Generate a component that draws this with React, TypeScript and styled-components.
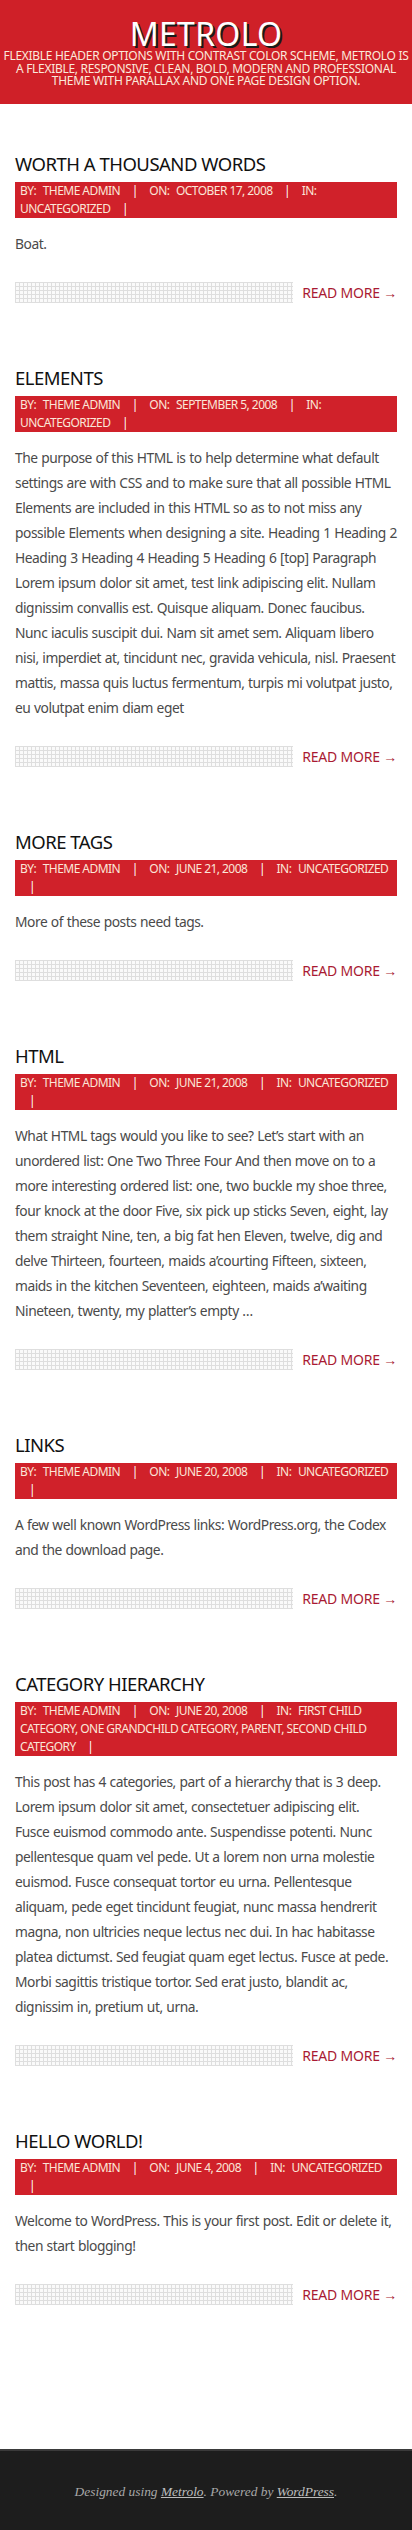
import styled, { createGlobalStyle } from "styled-components";

const GlobalStyle = createGlobalStyle`
  html, body {
    margin: 0;
    padding: 0;
    background: #ffffff;
  }
  body {
    font-family: "Noto Sans", "Open Sans", sans-serif;
  }
`;

type PostT = {
  title: string;
  date: string;
  category: string;
  body: string;
};

const posts: PostT[] = [
  {
    title: "Worth a Thousand Words",
    date: "October 17, 2008",
    category: "Uncategorized",
    body: "Boat.",
  },
  {
    title: "Elements",
    date: "September 5, 2008",
    category: "Uncategorized",
    body: "The purpose of this HTML is to help determine what default settings are with CSS and to make sure that all possible HTML Elements are included in this HTML so as to not miss any possible Elements when designing a site. Heading 1 Heading 2 Heading 3 Heading 4 Heading 5 Heading 6 [top] Paragraph Lorem ipsum dolor sit amet, test link adipiscing elit. Nullam dignissim convallis est. Quisque aliquam. Donec faucibus. Nunc iaculis suscipit dui. Nam sit amet sem. Aliquam libero nisi, imperdiet at, tincidunt nec, gravida vehicula, nisl. Praesent mattis, massa quis luctus fermentum, turpis mi volutpat justo, eu volutpat enim diam eget",
  },
  {
    title: "More Tags",
    date: "June 21, 2008",
    category: "Uncategorized",
    body: "More of these posts need tags.",
  },
  {
    title: "HTML",
    date: "June 21, 2008",
    category: "Uncategorized",
    body: "What HTML tags would you like to see? Let\u2019s start with an unordered list: One Two Three Four And then move on to a more interesting ordered list: one, two buckle my shoe three, four knock at the door Five, six pick up sticks Seven, eight, lay them straight Nine, ten, a big fat hen Eleven, twelve, dig and delve Thirteen, fourteen, maids a\u2019courting Fifteen, sixteen, maids in the kitchen Seventeen, eighteen, maids a\u2019waiting Nineteen, twenty, my platter\u2019s empty \u2026",
  },
  {
    title: "Links",
    date: "June 20, 2008",
    category: "Uncategorized",
    body: "A few well known WordPress links: WordPress.org, the Codex and the download page.",
  },
  {
    title: "Category Hierarchy",
    date: "June 20, 2008",
    category:
      "First Child Category, One Grandchild Category, Parent, Second Child Category",
    body: "This post has 4 categories, part of a hierarchy that is 3 deep. Lorem ipsum dolor sit amet, consectetuer adipiscing elit. Fusce euismod commodo ante. Suspendisse potenti. Nunc pellentesque quam vel pede. Ut a lorem non urna molestie euismod. Fusce consequat tortor eu urna. Pellentesque aliquam, pede eget tincidunt feugiat, nunc massa hendrerit magna, non ultricies neque lectus nec dui. In hac habitasse platea dictumst. Sed feugiat quam eget lectus. Fusce at pede. Morbi sagittis tristique tortor. Sed erat justo, blandit ac, dignissim in, pretium ut, urna.",
  },
  {
    title: "Hello world!",
    date: "June 4, 2008",
    category: "Uncategorized",
    body: "Welcome to WordPress. This is your first post. Edit or delete it, then start blogging!",
  },
];

const Header = styled.header`
  background: #cf2028;
  padding: 18px 0 16px;
  text-align: center;
`;

const SiteTitle = styled.h1`
  margin: 0;
  font-size: 32px;
  line-height: 32px;
  font-weight: 400;
  letter-spacing: 0.3px;
  color: #ffffff;
  text-transform: uppercase;
  text-shadow: 2px 2px 0 #1a1a1a;
`;

const Tagline = styled.p`
  margin: 0;
  font-size: 12px;
  line-height: 12.5px;
  letter-spacing: -0.3px;
  color: #fbe9dc;
  text-transform: uppercase;
`;

const Main = styled.main`
  padding: 48px 15px 144px;
`;

const Article = styled.article`
  margin-bottom: 63px;
  &:last-child {
    margin-bottom: 0;
  }
`;

const PostTitle = styled.h2`
  margin: 0 0 6px;
  font-size: 18.5px;
  line-height: 24px;
  font-weight: 400;
  letter-spacing: -0.5px;
  color: #111111;
  text-transform: uppercase;
`;

const Meta = styled.div`
  background: #d0212a;
  padding: 0 5px;
  font-size: 12px;
  line-height: 18px;
  letter-spacing: -0.55px;
  color: #fbe6d8;
  text-transform: uppercase;
`;

const MetaLabel = styled.span`
  margin-right: 4px;
`;

const MetaLink = styled.a`
  color: #fbe6d8;
  text-decoration: none;
`;

const Sep = styled.span`
  padding: 0 9px;
  color: #ffffff;
`;

const Excerpt = styled.p`
  margin: 13.5px 0 25.5px;
  font-size: 13.8px;
  line-height: 25px;
  letter-spacing: -0.46px;
  word-spacing: 0.5px;
  color: #4a4a4a;
`;

const MoreRow = styled.div`
  display: flex;
  align-items: center;
  height: 21px;
`;

const Grid = styled.div`
  flex: 1;
  height: 21px;
  margin-right: 9px;
  background-color: #fafafa;
  background-image: repeating-linear-gradient(
      90deg,
      #dedede 0,
      #dedede 1px,
      transparent 1px,
      transparent 4px
    ),
    repeating-linear-gradient(
      180deg,
      #dedede 0,
      #dedede 1px,
      transparent 1px,
      transparent 4px
    );
`;

const ReadMore = styled.a`
  font-size: 14px;
  line-height: 21px;
  letter-spacing: -0.2px;
  color: #a91a33;
  text-transform: uppercase;
  text-decoration: none;
  white-space: nowrap;
`;

const Footer = styled.footer`
  background: #1d1d1d;
  border-top: 2px solid #3a3a3a;
  padding: 32px 0 32px;
  text-align: center;
  font-family: "Liberation Serif", "DejaVu Serif", serif;
  font-style: italic;
  font-size: 13.4px;
  line-height: 17px;
  color: #a8a8a8;
`;

const FooterLink = styled.a`
  color: #bdbdbd;
  text-decoration: underline;
`;

function PostMeta({ post }: { post: PostT }) {
  return (
    <Meta>
      <MetaLabel>By:</MetaLabel> <MetaLink>Theme Admin</MetaLink> <Sep>|</Sep>{" "}
      <MetaLabel>On:</MetaLabel> <MetaLink>{post.date}</MetaLink> <Sep>|</Sep>{" "}
      <MetaLabel>In:</MetaLabel> <MetaLink>{post.category}</MetaLink>{" "}
      <Sep>|</Sep>
    </Meta>
  );
}

export default function App() {
  return (
    <>
      <GlobalStyle />
      <Header>
        <SiteTitle>Metrolo</SiteTitle>
        <Tagline>
          Flexible header options with contrast color scheme, Metrolo is a
          flexible, responsive, clean, bold, modern and professional theme with
          parallax and one page design option.
        </Tagline>
      </Header>
      <Main>
        {posts.map((post) => (
          <Article key={post.title}>
            <PostTitle>{post.title}</PostTitle>
            <PostMeta post={post} />
            <Excerpt>{post.body}</Excerpt>
            <MoreRow>
              <Grid />
              <ReadMore>Read More &rarr;</ReadMore>
            </MoreRow>
          </Article>
        ))}
      </Main>
      <Footer>
        Designed using <FooterLink>Metrolo</FooterLink>. Powered by{" "}
        <FooterLink>WordPress</FooterLink>.
      </Footer>
    </>
  );
}
